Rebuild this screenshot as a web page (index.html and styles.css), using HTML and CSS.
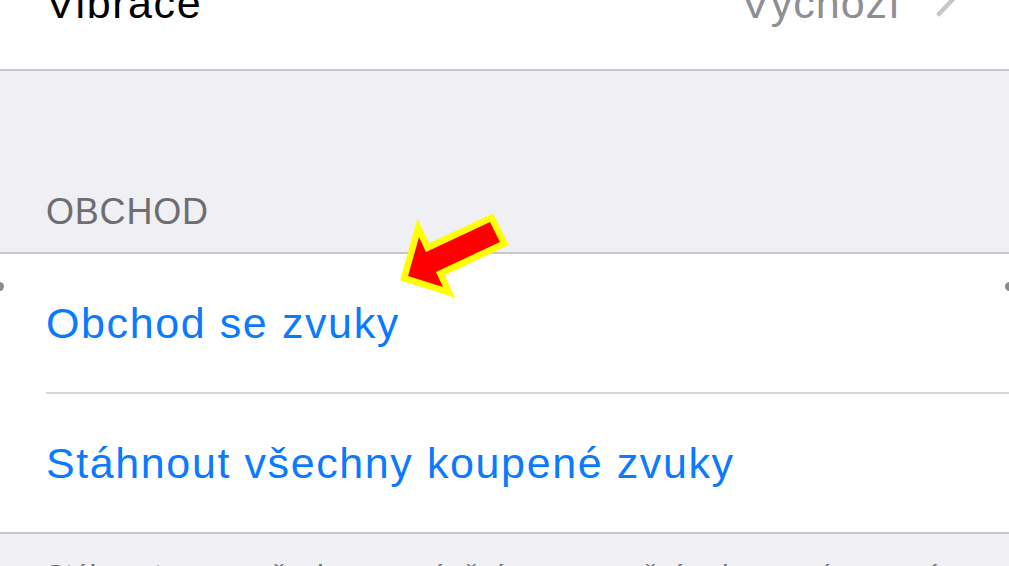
FILE: index.html
```html
<!DOCTYPE html>
<html lang="cs">
<head>
  <meta charset="UTF-8">
  <title>Zvuky a haptika</title>
  <link rel="stylesheet" href="styles.css">
</head>
<body>

  <div class="group group-top">
    <div class="row row-cut">
      <span class="label">Vibrace</span>
      <span class="value">Výchozí</span>
      <svg class="chevron" width="26" height="48" viewBox="0 0 26 48">
        <polyline points="4,4 23,24 4,44" fill="none" stroke="#c7c7cc" stroke-width="4.5" stroke-linecap="round" stroke-linejoin="round"/>
      </svg>
    </div>
  </div>

  <div class="section-header">OBCHOD</div>

  <div class="group">
    <div class="row row-dots">
      <span class="label link">Obchod se zvuky</span>
    </div>
    <div class="row row-inset">
      <span class="label link">Stáhnout všechny koupené zvuky</span>
    </div>
  </div>

  <p class="footer">Stáhnout znovu všechny vyzvánění a upozornění zakoupené pomocí účtu „jan.novak@icloud.com“.</p>

  <!-- šipka ze snímku -->
  <svg class="arrow" width="140" height="110" viewBox="0 0 140 110">
    <polygon points="28,76 39,37 46,52 110,22 120,42 56,72 63,87"
             fill="#ff0000" stroke="#ffff00" stroke-width="13" stroke-linejoin="miter" paint-order="stroke"/>
  </svg>

</body>
</html>
```

FILE: styles.css
```css
body {
  font-family: "Liberation Sans", Arial, sans-serif;
  background-color: #efeff4;
  margin: 0;
  padding: 0;
  overflow: hidden;
  position: relative;
  height: 566px;
}

.group {
  background-color: #ffffff;
  border-top: 2px solid #c8c7cc;
  border-bottom: 2px solid #c8c7cc;
}

.group-top {
  border-top: none;
  margin-top: -69px;
}

.row {
  display: flex;
  align-items: center;
  height: 138px;
  box-sizing: border-box;
  padding: 0 48px 0 46px;
  font-size: 43px;
  letter-spacing: 1.6px;
  position: relative;
}

.row-cut {
  padding-top: 6px;
}

.row-inset {
  border-top: 2px solid #d6d6da;
  margin-left: 46px;
  padding-left: 0;
  height: 140px;
}

.label {
  flex: 1;
  color: #000000;
  white-space: nowrap;
}

.link {
  color: #0a7aff;
}

.value {
  color: #8e8e93;
  letter-spacing: 1px;
}

.chevron {
  margin-left: 34px;
  margin-bottom: 18px;
  flex-shrink: 0;
}

/* tečky na okrajích řádku */
.row-dots::before,
.row-dots::after {
  content: "";
  position: absolute;
  top: 28px;
  width: 9px;
  height: 9px;
  border-radius: 50%;
  background-color: #8a8a8e;
}

.row-dots::before {
  left: -5px;
}

.row-dots::after {
  right: -5px;
}

.section-header {
  display: flex;
  align-items: flex-end;
  height: 181px;
  box-sizing: border-box;
  padding: 0 46px 22px;
  font-size: 36px;
  line-height: 36px;
  letter-spacing: 0.8px;
  color: #6d6d72;
}

.footer {
  margin: 0;
  padding: 24px 46px 0;
  font-size: 28px;
  line-height: 34px;
  letter-spacing: 0.6px;
  color: #6d6d72;
}

.arrow {
  position: absolute;
  left: 380px;
  top: 200px;
}
```
